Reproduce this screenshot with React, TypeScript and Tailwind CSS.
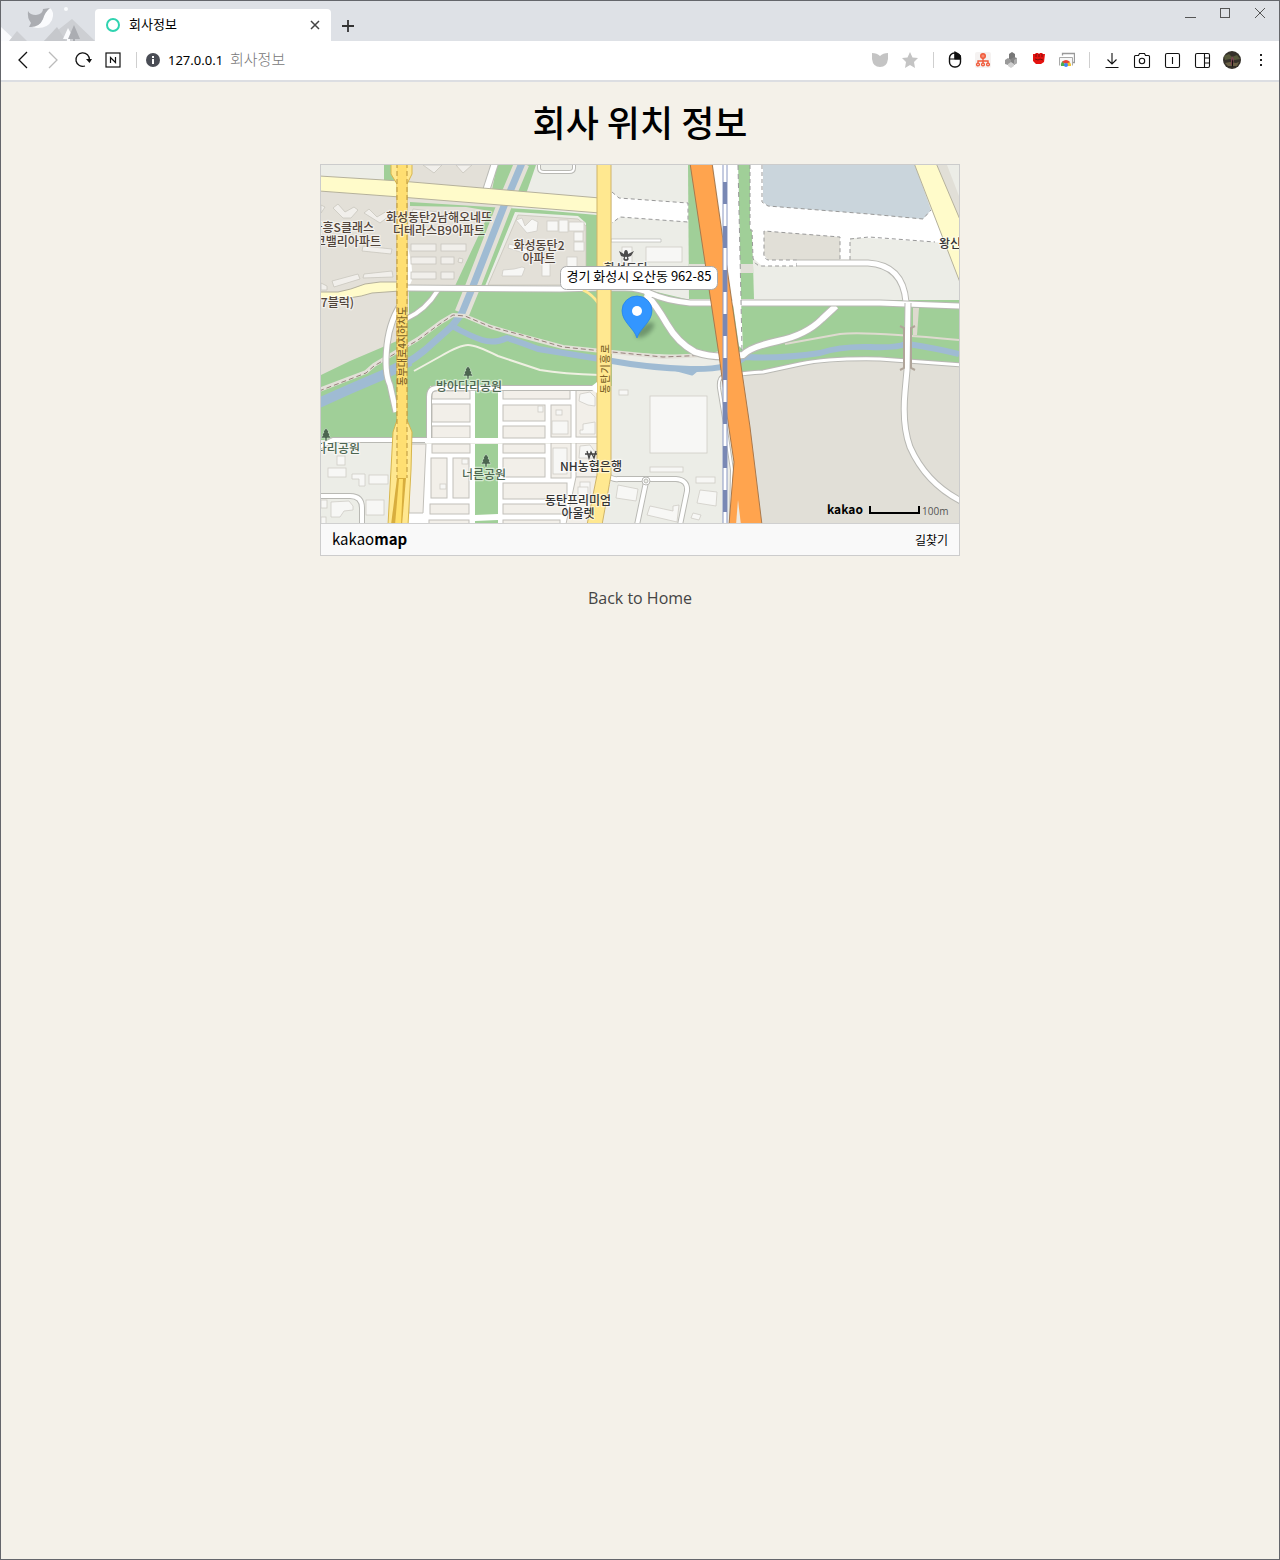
import React from "react";

const uiFont = "font-['Noto_Sans_CJK_KR',sans-serif]";

type Box = [number, number, number, number];

const lots: Box[] = [
  [432, 391, 470, 399], [432, 404, 470, 422], [432, 426, 470, 438], [432, 444, 470, 453],
  [431, 458, 447, 498], [453, 458, 469, 498], [430, 504, 469, 514], [429, 520, 469, 526],
  [503, 390, 570, 399], [503, 405, 545, 421], [503, 426, 545, 438], [503, 444, 545, 453],
  [503, 458, 545, 477], [503, 483, 567, 499], [503, 504, 566, 514], [503, 520, 560, 526],
  [551, 405, 571, 437], [551, 443, 571, 478], [576, 390, 600, 437], [576, 443, 600, 477],
];

const houses: Box[] = [
  [328, 468, 346, 477], [337, 456, 345, 465], [369, 475, 388, 484], [366, 500, 384, 515],
  [321, 500, 327, 508], [321, 517, 326, 524], [538, 406, 543, 412], [556, 410, 562, 415],
  [552, 421, 568, 434], [553, 448, 567, 474], [580, 482, 590, 494], [578, 487, 588, 500],
  [440, 484, 446, 489], [462, 459, 468, 464], [619, 390, 628, 395], [650, 467, 683, 472],
  [650, 396, 707, 453], [696, 477, 715, 483], [547, 221, 558, 231], [559, 220, 568, 232],
  [569, 222, 584, 231], [574, 232, 583, 241], [574, 242, 584, 251], [567, 257, 577, 267],
  [542, 263, 550, 276], [622, 247, 632, 263], [646, 247, 682, 262],
];

const terraces: Box[] = [
  [411, 244, 436, 251], [441, 244, 466, 251], [411, 257, 436, 264], [441, 257, 454, 264],
  [411, 272, 436, 279], [441, 272, 454, 279],
];

function Road({ d, w = 6, color = "#fff", edge = "#b9b9b4" }: { d: string; w?: number; color?: string; edge?: string }) {
  return (
    <g fill="none" strokeLinejoin="round">
      <path d={d} stroke={edge} strokeWidth={w + 2} />
      <path d={d} stroke={color} strokeWidth={w} />
    </g>
  );
}

function Label({ x, y, lines, color = "#51443a", anchor = "middle" }: { x: number; y: number; lines: string[]; color?: string; anchor?: "start" | "middle" | "end" }) {
  return (
    <g fontSize="12" fontWeight="500" fill={color} stroke="#fff" strokeOpacity="0.55" strokeWidth="2.5" strokeLinejoin="round" paintOrder="stroke" textAnchor={anchor}>
      {lines.map((line, i) => (
        <text key={line} x={x} y={y + i * 13}>{line}</text>
      ))}
    </g>
  );
}

function Tree({ x, y }: { x: number; y: number }) {
  return (
    <path
      transform={`translate(${x} ${y})`}
      d="M0-6 3-2H2L4 1H3L5 4H1V7H-1V4H-5L-3 1H-4L-2-2H-3Z"
      fill="#4c6650" stroke="#dff0dc" strokeWidth="0.5"
    />
  );
}

function CityMap() {
  return (
    <svg viewBox="321 165 638 358" className="block h-auto w-full font-['Noto_Sans_CJK_KR',sans-serif]" role="img" aria-label="회사 위치 지도">
      <rect x="321" y="165" width="638" height="358" fill="#ecede7" />

      {/* residential ground */}
      <path d="M321 191V378L397 343 410 291H478L530 165H384L392 182 321 177Z" fill="#e3e0d8" />
      <path d="M384 165H394V183L384 182Z" fill="#a0cf98" />

      {/* park */}
      <path d="M321 375 350 361 397 341 409 315V291H470L612 290 640 288 690 300H959V365L880 358 830 360 742 376 720 357 612 352V386H430V440H321Z" fill="#a0cf98" />
      <path d="M688 165H692L712 299H689Z" fill="#a0cf98" />
      <path d="M738 165H750L752 230 754 299H741Z" fill="#a0cf98" />
      <path d="M689 264H712V273H689ZM740 264H753V273H740Z" fill="#e1dfd7" />
      <path d="M410 202 540 210 597 215V289H586V223L578 216 515 212 485 286H455L490 211 466 207 410 206Z" fill="#a0cf98" />
      <path d="M497 165H536L526 194 492 190Z" fill="#a0cf98" />

      {/* second apartment complex */}
      <path d="M518 215 578 219 586 226V285H488Z" fill="#e3e0d8" stroke="#c4c0b6" strokeWidth="0.7" />

      {/* ground south of the stream */}
      <path d="M612 353 720 361 724 523H600L612 480Z" fill="#ecede7" />
      <path d="M742 376 800 365 880 359 959 365V523H762Z" fill="#e1dfd7" />

      {/* streams */}
      <g fill="none" strokeLinejoin="round">
        <path d="M522 163 504 206 473 286 462 313" stroke="#e3e0d8" strokeWidth="15" />
        <path d="M522 163 504 206 473 286 462 313 452 326 425 350Q408 364 385 374L350 389 319 403" stroke="#9fbbd3" strokeWidth="7" />
        <path d="M410 361 385 374 350 389 319 403" stroke="#9fbbd3" strokeWidth="10" />
        <path d="M452 326Q470 336 482 340T507 338Q520 342 538 349L563 353 612 361Q650 368 690 369T745 357Q780 359 820 353 842 346 870 347T905 344Q925 346 959 354" stroke="#9fbbd3" strokeWidth="6" />
        <path d="M670 368 692 374 698 369Z" fill="#9fbbd3" stroke="#9fbbd3" strokeWidth="3" />
        <path d="M319 390 366 372 374 365 418 339 441 322 453 315 465 316 491 327 518 335 563 347 612 352 663 357 710 355 737 350" stroke="#e3e0d8" strokeWidth="4" />
        <path d="M319 391 366 373 374 366 418 340 441 323 453 315 465 316 491 327 518 334 563 347 612 352 663 357 710 355 737 350" stroke="#96807a" strokeWidth="1" strokeDasharray="5 3" />
        <path d="M414 371 441 356Q460 345 468 345T498 356L540 370Q563 374 600 375" stroke="#eff0e2" strokeWidth="2" />
        <path d="M785 344 840 334Q865 331 959 340" stroke="#dedacf" strokeWidth="2" />
      </g>
      <path d="M913 308H919L917 335H913Z" fill="#dedacf" />

      {/* quarry and unfinished roads */}
      <path d="M750 165H763V202L768 206 869 214 923 219 931 209 946 243 869 238H850V261H868V266H762L753 258 752 232 750 228Z" fill="#fff" />
      <path d="M763 165H915L931 210 923 219 869 214 768 206 763 202Z" fill="#cad5dc" />
      <path d="M764 231 840 237V260H768L764 255Z" fill="#e1dfd7" />
      <path d="M612 192 619 198 688 203V222L620 217 612 223Z" fill="#fff" />
      <g fill="none" stroke="#999" strokeDasharray="4 3">
        <path d="M750 165V228M762 165V202L768 206 869 214 923 219 931 210M750 230H752L753 258Q755 266 762 266H797V260H768Q763 258 764 252V231L840 237V260M850 260V239L869 237 935 242" />
        <path d="M612 192 619 198 688 203V222L620 217 612 223" />
      </g>
      <path d="M937 165H959V218Z" fill="#e1dfd7" />
      <path d="M947 165H959V196Z" fill="#ecede7" />

      {/* shops district */}
      <path d="M412 444H600V523H409ZM430 440V395Q430 386 438 386H600V442H430Z" fill="#fff" />
      <path d="M409 444H426L423 513H409Z" fill="#f2efe9" stroke="#c2c0ba" />
      <path d="M475 391H498V438H475ZM475 444H498V514L475 515ZM475 521 498 520V524H475Z" fill="#a0cf98" />
      <g fill="#f2efe9" stroke="#c2c0ba">
        {lots.map(([a, b, c, d]) => <rect key={`${a}-${b}`} x={a} y={b} width={c - a} height={d - b} />)}
        <path d="M576 477H600L588 524H566Z" />
      </g>

      {/* minor roads */}
      <Road d="M319 447 333 440H393M411 440H428" w={4} />
      <Road d="M319 496H350Q362 496 362 508V525" w={4} />
      <Road d="M429 441V397Q429 388 437 388H597" w={4} />
      <path d="M425 438H472V443H425ZM430 440H600V443H430ZM432 401H470V403H432Z" fill="#fff" />
      <Road d="M495 163 486 191" w={6} />
      <Road d="M539 163V168Q539 172 544 172H569Q574 172 574 168V163" w={2} />
      <path d="M611 239H661V242H611Z" fill="#fff" stroke="#b9b9b4" strokeWidth="0.7" />
      <Road d="M404 300Q390 318 387 345T390 385L396 412" w={5} />
      <Road d="M438 290Q426 310 406 319" w={4} />
      <path d="M408 248Q413 265 412 280L408 289Z" fill="#fff" />
      <Road d="M646 294Q656 305 667 324T695 352Q715 359 743 355 750 347 778 341T822 319L836 306" w={6} />
      <Road d="M797 263H868Q903 265 906 302" w={5} />
      <Road d="M720 379Q728 374 763 372L800 364Q830 358 880 359L961 365" w={3} />
      <Road d="M742 376H724Q718 377 719 388L726 430 732 470 731 525" w={2} />
      <Road d="M406 288 560 289 597 288H625Q640 288 652 294T690 303H880L961 306" w={5} />
      <Road d="M908 303 907 370 905 392Q902 425 910 447 926 483 961 501" w={5} />
      <path d="M646 291 654 295 650 299 644 294Z" fill="#fff" />
      <g fill="none" stroke="#b0a59a" strokeWidth="2">
        <path d="M900 326 904 328V368L900 370M915 326 911 328V368L915 370" />
      </g>
      <path d="M583 290Q592 294 599 304" fill="none" stroke="#ffe890" strokeWidth="3" />
      <Road d="M606 474Q612 480 618 479H676Q688 480 687 491L680 525M646 482 637 525" w={4} />
      <circle cx="646" cy="481" r="4" fill="#fff" stroke="#b9b9b4" />
      <circle cx="646" cy="481" r="2" fill="#ecede7" stroke="#b9b9b4" />

      {/* main roads */}
      <path d="M319 176 400 181 600 198V213L400 197 319 191Z" fill="#fffbca" stroke="#b5b19c" />
      <path d="M319 292H338Q350 290 365 284L380 282H400V291L372 293Q352 300 319 299Z" fill="#fffbca" stroke="#b5b19c" />
      <path d="M914 163 961 285V222L936 163Z" fill="#fffbca" stroke="#b5b19c" />
      <path d="M597 163H611V475Q608 492 602 525H587L597 475Z" fill="#ffe890" stroke="#cfb46a" />
      <path d="M592 386 597 382V393L592 390Z" fill="#fff" />

      <path d="M391 163H412V174L407 184V420L412 432 411 470 408 525H388L393 432 397 420V184L391 174Z" fill="#ffe890" stroke="#d8b64c" />
      <path d="M397 163H407V478H397Z" fill="#ffdf72" />
      <path d="M397 163V478M407 163V478" stroke="#b9933b" strokeDasharray="5 3" />
      <path d="M397 478H406L402 525H391Z" fill="#d8ae3e" />
      <path d="M399 479H403L401 525H395Z" fill="#ffe06b" />

      {/* motorway and railway */}
      <path d="M713 163H738L741 300 743 350 739 346Z" fill="#fff" />
      <path d="M738 165 741 300 742 350" fill="none" stroke="#999" strokeDasharray="5 4" />
      <path d="M690 163H712L738 345 750 427 762 525H729L734 462 727 415 719 355Z" fill="#ffa44e" stroke="#a9794d" />
      <path d="M738 500 736 525H741Z" fill="#eee9e0" />
      <path d="M723 163H727V525H723Z" fill="#fff" stroke="#8a98c2" />
      <path d="M725 182V525" stroke="#7988b4" strokeWidth="4" strokeDasharray="22 22" />

      {/* buildings */}
      <g fill="#f7f7f5" stroke="#cfcdc6" strokeWidth="0.8">
        {houses.map(([a, b, c, d]) => <rect key={`${a}-${b}`} x={a} y={b} width={c - a} height={d - b} />)}
        <path d="M580 394 590 392 595 397V406L588 405 579 401ZM583 424 595 422V434H580V430H583ZM580 446 590 445 595 452V458H579Z" />
        <path d="M618 485 638 489 636 501 616 498ZM650 506 673 511V506L679 505 677 522 647 515ZM700 490 717 492 716 506 697 503ZM693 513 701 515 699 520 691 518Z" />
        <path d="M352 474H365V486H359V479H352ZM331 502 349 501 353 506V510L344 511 340 517H331Z" />
        <path d="M516 220 522 218 525 226 532 219 538 222 537 231 527 233ZM509 244 528 249 527 254 508 248ZM503 270 514 269 522 267 525 268 522 276H502Z" />
      </g>
      <g fill="#f1efeb" stroke="#c9c6be" strokeWidth="0.8">
        {terraces.map(([a, b, c, d]) => <rect key={`${a}-${b}`} x={a} y={b} width={c - a} height={d - b} />)}
        <path d="M333 208 338 204 345 212 354 207 358 210 351 218H343ZM364 213 369 209 377 217 387 211 389 216 380 223ZM423 165H442L434 173ZM456 165H472L463 173ZM413 209 438 212 437 217 412 213ZM321 205 325 207 321 213Z" />
        <path d="M332 281 358 274 360 279 334 287ZM364 274 392 271 393 277 363 278ZM363 246 392 249 391 254 362 251ZM321 283 327 286V290H321Z" />
        <path d="M459 258 463 259 462 263 458 262Z" />
      </g>

      {/* place names */}
      <Label x={439} y={222} lines={["화성동탄2남해오네뜨", "더테라스B9아파트"]} />
      <Label x={374} y={232} lines={["금흥S클래스"]} anchor="end" />
      <Label x={381} y={246} lines={["코밸리아파트"]} anchor="end" />
      <Label x={354} y={307} lines={["37블럭)"]} anchor="end" />
      <Label x={539} y={250} lines={["화성동탄2", "아파트"]} />
      <Label x={626} y={273} lines={["화성동탄"]} color="#444" />
      <Label x={939} y={248} lines={["왕신리"]} color="#333" anchor="start" />
      <Label x={469} y={391} lines={["방아다리공원"]} color="#4c6650" />
      <Label x={484} y={479} lines={["너른공원"]} color="#4c6650" />
      <Label x={360} y={453} lines={["다리공원"]} color="#4c6650" anchor="end" />
      <Label x={591} y={471} lines={["NH농협은행"]} color="#333" />
      <Label x={578} y={505} lines={["동탄프리미엄", "아울렛"]} color="#333" />
      <g fontSize="10" fontWeight="500" fill="#80642a" textAnchor="middle">
        <text transform="translate(406 346) rotate(-90)">동부대로4지하차도</text>
        {["로", "흥", "기", "탄", "동"].map((c, i) => (
          <text key={c} transform={`translate(609 ${349 + i * 10}) rotate(-90)`}>{c}</text>
        ))}
      </g>
      <Tree x={468} y={372} />
      <Tree x={326} y={434} />
      <Tree x={486} y={460} />
      <path d="M619 251 624 254Q624 250 626 250T628 254L634 251 631 256 628 257Q630 261 626 261T624 257L621 256Z" fill="#4b4b4b" />
      <circle cx="626" cy="258" r="1.2" fill="#eee" />
      <path d="M587 451 589 458 591 452 594 458 596 451M585 454H597" fill="none" stroke="#444" strokeWidth="1.3" />

      {/* marker */}
      <ellipse cx="645" cy="330" rx="11" ry="5" transform="rotate(-38 645 330)" fill="#35503a" opacity="0.45" className="blur-[2px]" />
      <path d="M637 338C634 328 622 322 622 310.5A15 14.5 0 0 1 652 310.5C652 322 640 328 637 338Z" fill="#3396ff" stroke="#2484ea" strokeWidth="0.8" />
      <circle cx="637" cy="311" r="5" fill="#fff" />

      {/* address bubble */}
      <rect x="560.5" y="266.5" width="157" height="23" rx="6" fill="#fff" stroke="#aaa" />
      <text x="639" y="281" fontSize="13" fill="#000" textAnchor="middle">경기 화성시 오산동 962-85</text>

      {/* scale */}
      <text x="827" y="514" fontSize="12" fontWeight="700">kakao</text>
      <path d="M870 506V513H919V506" fill="none" stroke="#000" strokeWidth="2" />
      <text x="922" y="515" fontSize="10" fill="#555" className="font-['Open_Sans',sans-serif]">100m</text>
    </svg>
  );
}

function IconButton({ label, wide = true, children }: { label: string; wide?: boolean; children: React.ReactNode }) {
  return (
    <button type="button" aria-label={label} className={`flex h-8 items-center justify-center ${wide ? "w-[30px]" : "w-7"}`}>
      {children}
    </button>
  );
}

function Icon({ children, color = "#111" }: { children: React.ReactNode; color?: string }) {
  return (
    <svg width="18" height="18" viewBox="0 0 18 18" fill="none" stroke={color} strokeWidth="1.1">
      {children}
    </svg>
  );
}

function Separator() {
  return (
    <div className="flex w-4 justify-center">
      <div className="h-4 w-px bg-[#cfcfcf]" />
    </div>
  );
}

function TitleBar() {
  return (
    <div className="flex h-10 items-end bg-[#dee1e6]">
      <svg width="94" height="40" viewBox="1 1 94 40" className="shrink-0">
        <path d="M1 27 16 41H1Z" fill="#fafbfd" />
        <path d="M9 41 17 31 27 41ZM44 41 72 19 95 41Z" fill="#cdcfd3" />
        <path d="M44 41 57 27 66 41Z" fill="#c6c8cc" />
        <path d="M68 28 63 39H67V41H70V39H74Z" fill="#fafbfd" />
        <path d="M74 25 68 39H73V41H75V39H80Z" fill="#abadb2" />
        <path d="M50 8Q55 12 52 20 48 28 38 28 32 28 31 25 40 27 43 19 45 11 50 8Z" fill="#fafbfd" />
        <path d="M28 11Q30 15 36 15 43 14 43 9L50 8Q45 12 43 19 39 28 29 27L31 23Q27 18 28 11Z" fill="#abadb2" />
        <circle cx="66" cy="9" r="2" fill="#fafbfd" />
      </svg>
      <div className="flex h-8 w-[236px] items-center rounded-t bg-white pr-2 pl-[11px]">
        <span className="h-[14px] w-[14px] rounded-full border-2 border-[#2fd3b0]" />
        <span className="ml-[9px] flex-1 pb-0.5 text-[13px] leading-5 text-black">회사정보</span>
        <button type="button" aria-label="탭 닫기" className="flex h-4 w-4 items-center justify-center">
          <svg width="10" height="10" viewBox="0 0 10 10" stroke="#444" strokeWidth="1.5"><path d="M1 1 9 9M9 1 1 9" /></svg>
        </button>
      </div>
      <button type="button" aria-label="새 탭" className="flex h-[30px] w-[34px] items-center justify-center">
        <svg width="12" height="12" viewBox="0 0 12 12" stroke="#333" strokeWidth="1.8"><path d="M6 0V12M0 6H12" /></svg>
      </button>
      <div className="ml-auto flex h-6 self-start pr-0.5">
        <button type="button" aria-label="최소화" className="flex w-[35px] items-center justify-center">
          <svg width="12" height="12" viewBox="0 0 12 12" stroke="#555"><path d="M1 10.5H12" /></svg>
        </button>
        <button type="button" aria-label="최대화" className="flex w-[35px] items-center justify-center">
          <svg width="12" height="12" viewBox="0 0 12 12" stroke="#555" fill="none"><rect x="1.5" y="1.5" width="9" height="9" /></svg>
        </button>
        <button type="button" aria-label="닫기" className="flex w-[35px] items-center justify-center">
          <svg width="12" height="12" viewBox="0 0 12 12" stroke="#555"><path d="M1 1 11 11M11 1 1 11" /></svg>
        </button>
      </div>
    </div>
  );
}

function Toolbar() {
  return (
    <div className="flex h-[41px] items-center border-b-2 border-[#dcdee2] bg-white pr-[5px] pb-0.5 pl-[7px]">
      <IconButton label="뒤로"><Icon><path d="M13 1 5 9 13 17" strokeWidth="1.3" /></Icon></IconButton>
      <IconButton label="앞으로"><Icon color="#bbb"><path d="M5 1 13 9 5 17" strokeWidth="1.3" /></Icon></IconButton>
      <IconButton label="새로고침">
        <Icon><path d="M11 15A6.8 6.8 0 1 1 15.5 9" strokeWidth="1.3" /><path d="M12 8H18L15.5 12Z" fill="#111" stroke="none" /></Icon>
      </IconButton>
      <IconButton label="네이버 홈">
        <Icon><rect x="2" y="2" width="14" height="14" strokeWidth="1.2" /><path d="M6.5 12V6.5L11.5 11.5V6" strokeWidth="1.2" /></Icon>
      </IconButton>
      <Separator />
      <button type="button" aria-label="사이트 정보" className="flex h-8 w-[18px] items-center justify-center">
        <svg width="14" height="14" viewBox="0 0 14 14"><circle cx="7" cy="7" r="7" fill="#4a4d55" /><path d="M6 3H8V5H6ZM6 6H8V11H6Z" fill="#fff" /></svg>
      </button>
      <input aria-label="주소" defaultValue="127.0.0.1" className="ml-1.5 w-[62px] bg-transparent font-['Noto_Sans',sans-serif] text-[13px] leading-5 text-black outline-none" />
      <span className="pb-0.5 text-[15px] leading-5 font-light text-[#777]">회사정보</span>

      <div className="ml-auto flex items-center">
        <IconButton label="그린 시스템">
          <svg width="16" height="14" viewBox="0 0 16 14"><path d="M0 0Q5 0 8 3 11 0 16 0V6Q15 14 8 14T0 6Z" fill="#c4c4c4" /></svg>
        </IconButton>
        <IconButton label="즐겨찾기">
          <svg width="16" height="16" viewBox="0 0 16 16"><path d="M8 0 10.5 5.5 16 6 12 10 13 16 8 13 3 16 4 10 0 6 5.5 5.5Z" fill="#c4c4c4" /></svg>
        </IconButton>
        <Separator />
        <IconButton label="마우스 제스처" wide={false}>
          <Icon><rect x="3.5" y="2" width="11" height="14" rx="5" strokeWidth="1.4" /><path d="M3.5 8H14.5M9 2V8" /><path d="M9 1 14.5 5V8H9Z" fill="#111" /></Icon>
        </IconButton>
        <IconButton label="사이트맵" wide={false}>
          <svg width="16" height="16" viewBox="0 0 16 16" fill="none" stroke="#f05a3a" strokeWidth="1.4">
            <rect width="16" height="16" rx="2" fill="#f5f2f1" stroke="none" /><circle cx="8" cy="4" r="2.3" fill="#f68c74" />
            <path d="M8 6V11M3 11V9H13V11" /><circle cx="3" cy="12.5" r="1.4" /><circle cx="8" cy="12.5" r="1.4" /><circle cx="13" cy="12.5" r="1.4" />
          </svg>
        </IconButton>
        <IconButton label="블록" wide={false}>
          <svg width="12" height="16" viewBox="0 0 12 16">
            <path d="M4 2 7 0 10 2V7L7 9 4 7Z" fill="#777" /><path d="M6 7 9 5 12 6V11L9 13 6 11Z" fill="#858585" /><path d="M9 8 12 6V11L9 13Z" fill="#aaa" />
            <path d="M0 8 3 6 6 8V12L3 13 0 12Z" fill="#999" /><path d="M3 12 6 10 9 12V14L6 16 3 14Z" fill="#d0d0d0" />
          </svg>
        </IconButton>
        <IconButton label="주먹" wide={false}>
          <svg width="14" height="16" viewBox="0 0 14 16"><path d="M1 2H3L4 1H6L7 2 8 1H10L11 2H13L12 10 9 12H4L1 9Z" fill="#e5120f" /><path d="M3 7 6 8 8 7 11 8M4 2V5M7 2V5M10 2V5" stroke="#60100d" strokeWidth="0.8" fill="none" /></svg>
        </IconButton>
        <IconButton label="원격 화면" wide={false}>
          <svg width="16" height="16" viewBox="0 0 16 16" fill="none">
            <path d="M3.5 3.5V1.5H15.5V10.5H13.5" stroke="#999" strokeWidth="1.3" /><path d="M0.5 13.5V5.5H13.5V13.5" fill="#f8f8f8" stroke="#aaa" />
            <path d="M2 14A5 5 0 0 1 4 9L7 14Z" fill="#4caf50" /><path d="M9 9A5 5 0 0 1 12 14H7Z" fill="#f0c12c" /><path d="M3 10Q7 6 11 10L7 12Z" fill="#e84335" /><circle cx="7" cy="13" r="2" fill="#4285f4" />
          </svg>
        </IconButton>
        <Separator />
        <IconButton label="다운로드"><Icon><path d="M9 2V13M4.5 8.5 9 13 13.5 8.5M2.5 16.5H15.5" /></Icon></IconButton>
        <IconButton label="캡처">
          <Icon><path d="M1.5 5.5Q1.5 4.5 2.5 4.5H5.5L6.5 2.5H11.5L12.5 4.5H15.5Q16.5 4.5 16.5 5.5V15.5Q16.5 16.5 15.5 16.5H2.5Q1.5 16.5 1.5 15.5Z" /><circle cx="9" cy="10" r="2.7" /></Icon>
        </IconButton>
        <IconButton label="듀얼 탭"><Icon><rect x="2.5" y="2.5" width="14" height="14" rx="1.5" /><path d="M9.5 6V13" /></Icon></IconButton>
        <IconButton label="사이드바"><Icon><rect x="2.5" y="2.5" width="14" height="14" rx="1.5" /><path d="M11.5 2.5V16.5M11.5 7H16.5M11.5 12H16.5" /></Icon></IconButton>
        <IconButton label="프로필">
          <svg width="18" height="18" viewBox="0 0 18 18">
            <circle cx="9" cy="9" r="9" fill="#35312a" /><path d="M1 5 6 3 9 6 14 4 17 8 12 9 7 8 2 9Z" fill="#56583a" /><path d="M2 12 7 11 13 12 16 11 14 15 5 15Z" fill="#6a6045" /><path d="M9 5 11 8 10 14H8V8Z" fill="#7b4550" /><path d="M9 8 10 10V15L9 16Z" fill="#151010" />
          </svg>
        </IconButton>
        <button type="button" aria-label="메뉴" className="flex h-8 w-[27px] items-center justify-center">
          <svg width="4" height="14" viewBox="0 0 4 14" fill="#222"><rect x="1" y="1" width="2" height="2" /><rect x="1" y="6" width="2" height="2" /><rect x="1" y="11" width="2" height="2" /></svg>
        </button>
      </div>
    </div>
  );
}

export default function App() {
  return (
    <div className={`flex min-h-screen flex-col border border-[#64666b] bg-[#f4f1e9] ${uiFont}`}>
      <header>
        <TitleBar />
        <Toolbar />
      </header>
      <main className="flex flex-1 flex-col items-center px-4">
        <h1 className="mt-3.5 mb-[18px] text-[36px] leading-[50px] font-medium text-black">회사 위치 정보</h1>
        <section className="w-full max-w-[640px] border border-[#ccc]" aria-label="지도">
          <CityMap />
          <div className="flex h-8 items-center justify-between border-t border-[#d0d0d0] bg-[#f9f9f9] px-[11px]">
            <a href="#map" className="pb-0.5 text-[15px] leading-5 text-black">kakao<b>map</b></a>
            <a href="#route" className="text-[12px] leading-5 text-black">길찾기</a>
          </div>
        </section>
        <a href="#home" className="mt-7 font-['Open_Sans',sans-serif] text-[16px] leading-7 text-[#444]">Back to Home</a>
      </main>
    </div>
  );
}
